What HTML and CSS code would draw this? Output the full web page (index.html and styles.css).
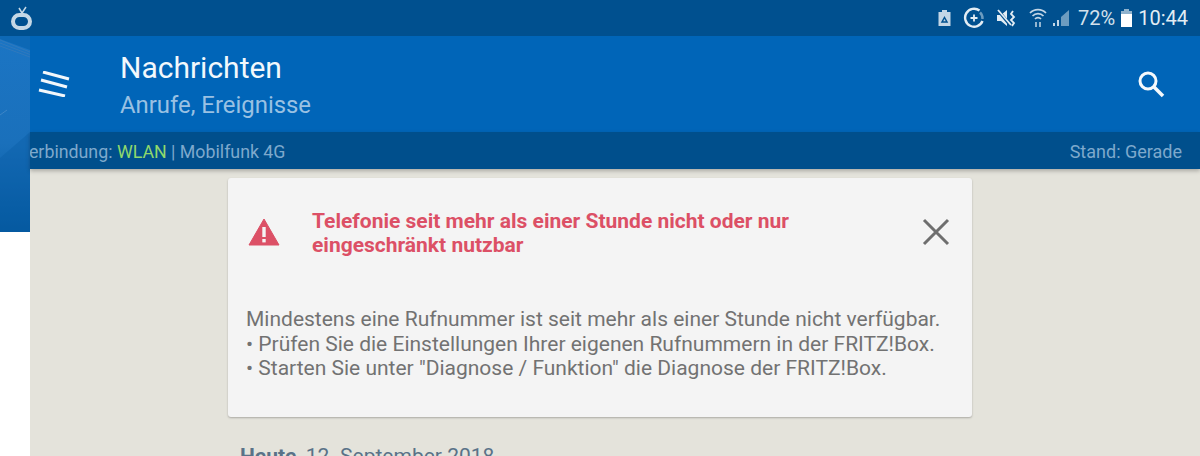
FILE: index.html
```html
<!DOCTYPE html>
<html lang="de">
<head>
    <meta charset="UTF-8">
    <meta name="viewport" content="width=device-width, initial-scale=1.0">
    <title>Nachrichten</title>
    <link rel="stylesheet" href="styles.css">
</head>
<body>
    <div class="statusbar">
        <svg class="tv-icon" width="24" height="30" viewBox="0 0 24 30">
            <path d="M9 5 L12 10 L16 4" stroke="#c5d8e6" stroke-width="1.500" fill="none"/>
            <rect x="3" y="12" width="17" height="13" rx="6.500" fill="none" stroke="#c5d8e6" stroke-width="4"/>
        </svg>
        <div class="status-icons">
            <svg class="ic-recycle" width="13" height="18" viewBox="0 0 13 18">
                <path d="M4 1h5v2h3.500v14H.5V3H4z" fill="#c3d6e6"/>
                <path d="M6.500 8.500l2.500 4.500H4z" fill="none" stroke="#00508f" stroke-width="1.500"/>
            </svg>
            <svg class="ic-data" width="22" height="22" viewBox="0 0 22 22">
                <path d="M16.500 3.500A9 9 0 1 0 19.500 14" fill="none" stroke="#e3edf4" stroke-width="2.400"/>
                <path d="M17 5.500A8 8 0 0 1 19.500 12" fill="none" stroke="#6d9cc0" stroke-width="2.400"/>
                <path d="M11 7.500v7M7.500 11h7" stroke="#e3edf4" stroke-width="1.800"/>
            </svg>
            <svg class="ic-mute" width="20" height="20" viewBox="0 0 20 20">
                <path d="M1 7h4l6-5v16l-6-5H1z" fill="#e3edf4"/>
                <path d="M1 1l13 16" stroke="#00508f" stroke-width="3"/>
                <path d="M2 2l13 15" stroke="#e3edf4" stroke-width="1.800"/>
                <path d="M17 3l-2 3 3 3-3 3 3 3-2 3" fill="none" stroke="#e3edf4" stroke-width="1.800"/>
            </svg>
            <svg class="ic-wifi" width="18" height="22" viewBox="0 0 18 22">
                <path d="M1 6a11 11 0 0 1 16 0M3.500 9a7.500 7.500 0 0 1 11 0M6 12a4 4 0 0 1 6 0" fill="none" stroke="#c3d6e6" stroke-width="1.700"/>
                <path d="M7 15v5M11 20v-5" stroke="#c3d6e6" stroke-width="1.500" fill="none"/>
            </svg>
            <svg class="ic-signal" width="18" height="18" viewBox="0 0 18 18">
                <path d="M1 17h2v-3H1zM5 17h2v-6H5z" fill="#c3d6e6"/>
                <path d="M9 17V8l8-7v16z" fill="#6d9cc0"/>
            </svg>
            <span class="battery-pct">72%</span>
            <svg class="ic-battery" width="13" height="18" viewBox="0 0 13 18">
                <path d="M4 0h5v2h3v16H1V2h3z" fill="#8fb2cd"/>
                <rect x="1" y="5" width="11" height="13" fill="#fff"/>
            </svg>
            <span class="clock">10:44</span>
        </div>
    </div>

    <div class="layout">
        <div class="drawer-peek">
            <svg class="drawer-art" width="30" height="196" viewBox="0 0 30 196">
                <defs>
                    <linearGradient id="drawerFill" x1="0" y1="0" x2="0" y2="1">
                        <stop offset="0" stop-color="#1b75c4"/>
                        <stop offset="0.55" stop-color="#1a70bb"/>
                        <stop offset="1" stop-color="#00559a"/>
                    </linearGradient>
                </defs>
                <rect width="30" height="196" fill="url(#drawerFill)"/>
                <path d="M0 0 H30 V14 L0 3 Z" fill="#0d68b5"/>
                <path d="M0 4 L30 16 M0 7 L30 18.500 M0 10 L30 21" stroke="#3079bd" stroke-width="1" fill="none"/>
                <path d="M0 122 L30 96 V196 H0 Z" fill="#0b5fa8" opacity="0.45"/>
                <path d="M0 79 L7 74" stroke="#3d85c6" stroke-width="1" fill="none"/>
            </svg>
        </div>
        <div class="main">
            <header class="appbar">
                <svg class="menu-icon" width="32" height="26" viewBox="0 0 32 26">
                    <path d="M5 1 L31 8 M3 9 L29 16 M1 19 L27 25" stroke="#f2f7fb" stroke-width="3" fill="none"/>
                </svg>
                <div class="titles">
                    <h1>Nachrichten</h1>
                    <p>Anrufe, Ereignisse</p>
                </div>
                <svg class="search-icon" width="30" height="30" viewBox="0 0 30 30">
                    <circle cx="12" cy="12" r="8" fill="none" stroke="#f4f9fc" stroke-width="3"/>
                    <path d="M18 18 L27 27" stroke="#f4f9fc" stroke-width="3.500"/>
                </svg>
            </header>
            <div class="subbar">
                <span class="connection">Verbindung: <b>WLAN</b> | Mobilfunk 4G</span>
                <span class="stand">Stand: Gerade</span>
            </div>
            <div class="content">
                <section class="card">
                    <div class="card-head">
                        <svg class="warn-icon" width="32" height="28" viewBox="0 0 32 28">
                            <path d="M16 1 L31 27 H1 Z" fill="#dc5066" stroke="#dc5066" stroke-width="1"/>
                            <rect x="14.300" y="9" width="3.400" height="10" fill="#f4f4f4"/>
                            <rect x="14.300" y="21" width="3.400" height="3.400" fill="#f4f4f4"/>
                        </svg>
                        <h2>Telefonie seit mehr als einer Stunde nicht oder nur eingeschränkt nutzbar</h2>
                        <svg class="close-icon" width="28" height="28" viewBox="0 0 28 28">
                            <path d="M2 2 L26 26 M26 2 L2 26" stroke="#6e6e6e" stroke-width="3"/>
                        </svg>
                    </div>
                    <p class="card-text">Mindestens eine Rufnummer ist seit mehr als einer Stunde nicht verfügbar.<br>• Prüfen Sie die Einstellungen Ihrer eigenen Rufnummern in der FRITZ!Box.<br>• Starten Sie unter "Diagnose / Funktion" die Diagnose der FRITZ!Box.</p>
                </section>
                <div class="day"><b>Heute</b>, 12. September 2018</div>
            </div>
        </div>
    </div>
</body>
</html>
```

FILE: styles.css
```css
html, body {
    height: 456px;
    overflow: hidden;
}
body {
    margin: 0;
    font-family: Roboto, "Liberation Sans", sans-serif;
    background-color: #e4e3db;
    display: flex;
    flex-direction: column;
}
svg {
    display: block;
    flex: none;
}
.statusbar {
    height: 36px;
    flex: none;
    background-color: #00508f;
    display: flex;
    align-items: center;
    justify-content: space-between;
    padding: 0 12px 0 10px;
}
.status-icons {
    display: flex;
    align-items: center;
    color: #d3e1ec;
    font-size: 20px;
}
.ic-data {
    margin-left: 12px;
}
.ic-mute {
    margin-left: 11px;
}
.ic-wifi {
    margin-left: 13px;
}
.ic-signal {
    margin-left: 5px;
}
.battery-pct {
    margin-left: 8px;
}
.ic-battery {
    margin-left: 5px;
}
.clock {
    color: #e3edf4;
    margin-left: 5px;
}
.layout {
    flex: 1;
    display: flex;
    min-height: 0;
}
.drawer-peek {
    width: 30px;
    flex: none;
    background-color: #fff;
}
.main {
    flex: 1;
    min-width: 0;
    display: flex;
    flex-direction: column;
}
.appbar {
    height: 96px;
    flex: none;
    background-color: #0065b8;
    display: flex;
    align-items: center;
    padding: 0 34px 0 8px;
}
.menu-icon {
    margin-right: 50px;
    margin-top: -1px;
}
.titles {
    flex: 1;
}
.titles h1 {
    margin: 0 0 6px;
    font-size: 30px;
    font-weight: 400;
    line-height: 35px;
    color: #f2f8fc;
}
.titles p {
    margin: 0;
    font-size: 23.900px;
    line-height: 28px;
    color: #99c1e3;
}
.subbar {
    height: 37px;
    box-sizing: border-box;
    flex: none;
    background-color: #004f8c;
    box-shadow: 0 2px 4px rgba(0, 0, 0, 0.25);
    position: relative;
    overflow: hidden;
    display: flex;
    align-items: center;
    justify-content: space-between;
    padding: 2px 18px 0 0;
    font-size: 17.800px;
    color: #7ea9cc;
}
.connection {
    margin-left: -12px;
}
.connection b {
    font-weight: 400;
    color: #8fd86c;
}
.stand {
    font-size: 18px;
}
.content {
    flex: 1;
    min-height: 0;
    padding: 9px 228px 0 198px;
}
.card {
    height: 239px;
    box-sizing: border-box;
    background-color: #f4f4f4;
    border-radius: 3px;
    box-shadow: 0 1px 2px rgba(0, 0, 0, 0.25);
    padding: 31px 18px 0;
}
.card-head {
    display: flex;
    align-items: center;
}
.warn-icon {
    margin: 0 32px 2px 2px;
}
.card-head h2 {
    flex: 1;
    margin: 0;
    font-size: 21px;
    line-height: 24px;
    font-weight: 700;
    color: #dc5066;
}
.close-icon {
    margin: 0 4px 2px 0;
}
.card-text {
    margin: 50px 0 0;
    font-size: 21px;
    line-height: 24.500px;
    color: #727272;
}
.day {
    margin-top: 27px;
    padding-left: 12px;
    font-size: 21px;
    color: #5a7288;
}
```
